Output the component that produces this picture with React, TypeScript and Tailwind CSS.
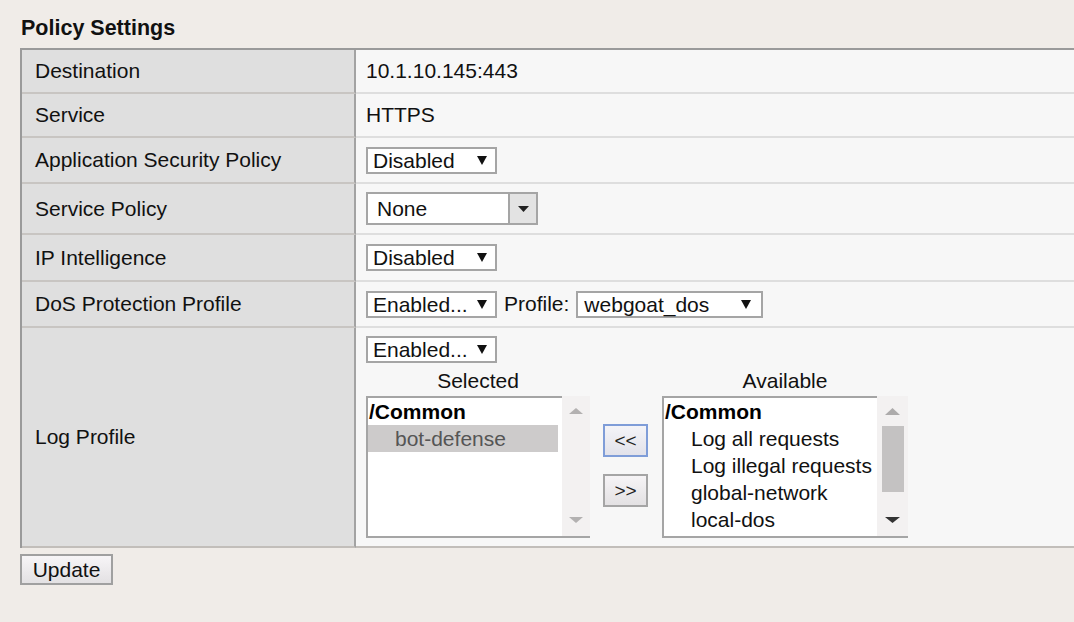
import React from 'react';

const Tri = ({ w, h, color, up = false }: { w: number; h: number; color: string; up?: boolean }) => (
  <svg width={w} height={h} viewBox={`0 0 ${w} ${h}`} className="block">
    <polygon points={up ? `0,${h} ${w},${h} ${w / 2},0` : `0,0 ${w},0 ${w / 2},${h}`} fill={color} />
  </svg>
);

const Select = ({ value, width, padL = 5, padR = 8 }: { value: string; width: number; padL?: number; padR?: number }) => (
  <div
    className="flex h-[27px] items-center justify-between border-2 border-[#a5a5a5] bg-white"
    style={{ width, paddingLeft: padL, paddingRight: padR }}
  >
    <span className="text-[21px] leading-none text-[#111]">{value}</span>
    <Tri w={10} h={9} color="#111" />
  </div>
);

const Row = ({ label, height, last = false, children }: { label: string; height: number; last?: boolean; children: React.ReactNode }) => (
  <div className="flex" style={{ height: height + 2 }}>
    <div
      className={`flex w-[334px] shrink-0 items-center border-r-2 border-b-2 border-r-[#a3a3a3] bg-[#dfdfdf] pl-[13px] ${
        last ? 'border-b-[#c2beba]' : 'border-b-[#c8c5c2]'
      }`}
    >
      <span className="text-[21px] text-[#111]">{label}</span>
    </div>
    <div className={`flex flex-1 items-center border-b-2 bg-[#f7f7f7] pl-[10px] ${last ? 'border-b-[#c2beba]' : 'border-b-[#dedede]'}`}>
      {children}
    </div>
  </div>
);

const Item = ({ text, bold = false, indent = false, highlight = false }: { text: string; bold?: boolean; indent?: boolean; highlight?: boolean }) => (
  <div
    className={`h-[27px] whitespace-nowrap text-[21px] leading-[27px] ${bold ? 'font-bold text-black' : ''} ${
      indent ? 'pl-[27px]' : 'pl-[1px]'
    } ${highlight ? 'mr-[4px] bg-[#cdcbcb] text-[#555]' : 'text-[#111]'}`}
  >
    {text}
  </div>
);

const App: React.FC = () => {
  return (
    <div className="min-h-screen bg-[#f0ece8] pl-[20px] pt-[16px]" style={{ fontFamily: '"Liberation Sans", Arial, sans-serif' }}>
      <h1 className="mb-[8px] pl-[1px] text-[21.5px] font-bold leading-[24px] text-[#111]">Policy Settings</h1>

      <div className="border-l-2 border-t-2 border-[#9a9a9a]">
        <Row label="Destination" height={42}>
          <span className="text-[21px] text-[#111]">10.1.10.145:443</span>
        </Row>
        <Row label="Service" height={42}>
          <span className="text-[21px] text-[#111]">HTTPS</span>
        </Row>
        <Row label="Application Security Policy" height={44}>
          <Select value="Disabled" width={131} />
        </Row>
        <Row label="Service Policy" height={49}>
          <div className="flex h-[33px] w-[172px] border-2 border-[#a5a5a5] bg-white">
            <div className="flex flex-1 items-center pl-[9px]">
              <span className="text-[21px] leading-none text-[#111]">None</span>
            </div>
            <div className="flex w-[28px] items-center justify-center border-l-2 border-[#a5a5a5] bg-[#e3e3e3]">
              <Tri w={11} h={6} color="#222" />
            </div>
          </div>
        </Row>
        <Row label="IP Intelligence" height={45}>
          <Select value="Disabled" width={131} />
        </Row>
        <Row label="DoS Protection Profile" height={44}>
          <div className="flex items-center">
            <Select value="Enabled..." width={131} />
            <span className="ml-[7px] mr-[7px] text-[21px] text-[#111]">Profile:</span>
            <Select value="webgoat_dos" width={187} padL={6} padR={10} />
          </div>
        </Row>
        <Row label="Log Profile" height={218} last>
          <div className="flex h-full flex-col py-[8px]">
            <Select value="Enabled..." width={131} />
            <div className="flex">
              <div className="flex flex-col">
                <div className="h-[33px] pt-[1px] text-center text-[21px] leading-[33px] text-[#111]">Selected</div>
                <div className="flex h-[142px] w-[224px] border-b-2 border-l-2 border-[#a5a5a5]">
                  <div className="flex-1 border-t-2 border-[#a5a5a5] bg-white">
                    <Item text="/Common" bold />
                    <Item text="bot-defense" indent highlight />
                  </div>
                  <div className="flex w-[28px] flex-col items-center justify-between bg-[#f3f1f1] pb-[13px] pt-[12px]">
                    <Tri w={14} h={6} color="#b3b1b1" up />
                    <Tri w={14} h={6} color="#b3b1b1" />
                  </div>
                </div>
              </div>

              <div className="ml-[13px] mr-[14px] flex flex-col gap-[17px] pt-[61px]">
                <button className="h-[33px] w-[45px] border-2 border-[#7f9dd8] bg-gradient-to-b from-[#f4f4f8] to-[#e2e2ea] text-[19px] leading-none text-[#222]">
                  &lt;&lt;
                </button>
                <button className="h-[33px] w-[45px] border-2 border-[#a5a5a5] bg-gradient-to-b from-[#f6f4f6] to-[#e3e1e3] text-[19px] leading-none text-[#222]">
                  &gt;&gt;
                </button>
              </div>

              <div className="flex flex-col">
                <div className="h-[33px] pt-[1px] text-center text-[21px] leading-[33px] text-[#111]">Available</div>
                <div className="flex h-[142px] w-[246px] border-b-2 border-l-2 border-[#a5a5a5]">
                  <div className="flex-1 overflow-hidden border-t-2 border-[#a5a5a5] bg-white">
                    <Item text="/Common" bold />
                    <Item text="Log all requests" indent />
                    <Item text="Log illegal requests" indent />
                    <Item text="global-network" indent />
                    <Item text="local-dos" indent />
                  </div>
                  <div className="flex w-[31px] flex-col items-center bg-[#f3f1f1] pb-[13px] pt-[12px]">
                    <Tri w={15} h={7} color="#adabab" up />
                    <div className="mt-[11px] h-[66px] w-[22px] bg-[#c4c2c2]" />
                    <div className="flex-1" />
                    <Tri w={15} h={6} color="#333" />
                  </div>
                </div>
              </div>
            </div>
          </div>
        </Row>
      </div>

      <button className="mt-[6px] h-[31px] w-[93px] border-2 border-[#a0a0a0] bg-gradient-to-b from-[#f7f5f7] to-[#e3e1e3] text-center text-[21px] leading-none text-[#111]">
        Update
      </button>
    </div>
  );
};

export default App;
